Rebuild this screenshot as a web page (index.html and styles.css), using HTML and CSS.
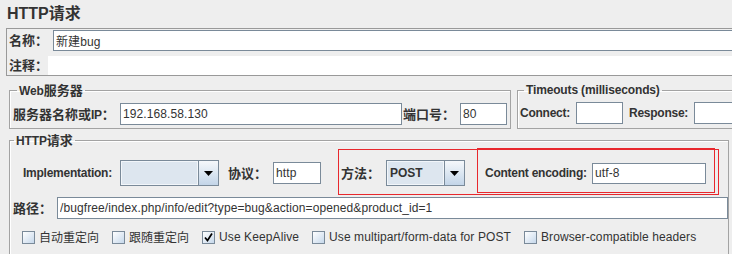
FILE: index.html
```html
<!DOCTYPE html>
<html lang="zh-CN">
<head>
  <meta charset="UTF-8" />
  <title>HTTP请求</title>
  <link rel="stylesheet" href="styles.css">
</head>
<body>
  <h1 class="title">HTTP<span class="zh">请求</span></h1>

  <div class="name-panel">
    <div class="row name-row">
      <label class="lbl w-name"><span class="zh">名称：</span></label>
      <input class="txt grow" type="text" value="新建bug" />
    </div>
    <div class="row comment-row">
      <label class="lbl w-comment"><span class="zh">注释：</span></label>
      <div class="comment"></div>
    </div>
  </div>

  <div class="servers">
    <fieldset class="web">
      <legend>Web<span class="zh">服务器</span></legend>
      <div class="row">
        <label class="lbl w-server"><span class="zh">服务器名称或</span>IP<span class="zh">：</span></label>
        <input class="txt grow" type="text" value="192.168.58.130" />
        <label class="lbl w-port"><span class="zh">端口号：</span></label>
        <input class="txt port" type="text" value="80" />
      </div>
    </fieldset>
    <fieldset class="timeouts">
      <legend>Timeouts (milliseconds)</legend>
      <div class="row">
        <label class="lbl w-connect">Connect:</label>
        <input class="txt port" type="text" value="" />
        <label class="lbl w-response">Response:</label>
        <input class="txt grow" type="text" value="" />
      </div>
    </fieldset>
  </div>

  <fieldset class="http">
    <legend>HTTP<span class="zh">请求</span></legend>

    <div class="row req-row">
      <label class="lbl w-impl">Implementation:</label>
      <div class="combo impl">
        <div class="combo-val"></div>
        <div class="combo-btn"><svg width="9" height="5" viewBox="0 0 9 5"><polygon points="0,0 9,0 4.5,5" fill="#000"/></svg></div>
      </div>
      <label class="lbl w-proto"><span class="zh">协议：</span></label>
      <input class="txt proto" type="text" value="http" />
      <label class="lbl w-method"><span class="zh">方法：</span></label>
      <div class="combo method">
        <div class="combo-val">POST</div>
        <div class="combo-btn"><svg width="9" height="5" viewBox="0 0 9 5"><polygon points="0,0 9,0 4.5,5" fill="#000"/></svg></div>
      </div>
      <label class="lbl w-enc">Content encoding:</label>
      <input class="txt enc" type="text" value="utf-8" />
    </div>

    <div class="row path-row">
      <label class="lbl w-path"><span class="zh">路径：</span></label>
      <input class="txt grow" type="text" value="/bugfree/index.php/info/edit?type=bug&amp;action=opened&amp;product_id=1" />
    </div>

    <div class="row checks">
      <span class="check"><span class="cb"></span><span class="zh-r">自动重定向</span></span>
      <span class="check"><span class="cb"></span><span class="zh-r">跟随重定向</span></span>
      <span class="check"><span class="cb"><svg width="11" height="11" viewBox="0 0 11 11"><polyline points="2,5.5 4.5,8.5 9,1.5" fill="none" stroke="#000" stroke-width="1.7"/></svg></span>Use KeepAlive</span>
      <span class="check"><span class="cb"></span>Use multipart/form-data for POST</span>
      <span class="check"><span class="cb"></span>Browser-compatible headers</span>
    </div>
  </fieldset>

  <!-- red annotation boxes -->
  <div class="mark mark-a"></div>
  <div class="mark mark-b"></div>
</body>
</html>
```

FILE: styles.css
```css
* {
  box-sizing: border-box;
  margin: 0;
  padding: 0;
}

body {
  width: 732px;
  height: 254px;
  overflow: hidden;
  position: relative;
  background-color: #eeeeee;
  color: #333;
  font-family: "Liberation Sans", "Noto Sans CJK SC", sans-serif;
  font-size: 12px;
  line-height: 14px;
}

.zh {
  font-family: "Noto Sans CJK SC", sans-serif;
  font-size: 13px;
  letter-spacing: 0;
}

.zh-r {
  font-family: "Noto Sans CJK SC", sans-serif;
  font-size: 12px;
  letter-spacing: 0;
}

.title {
  height: 28px;
  padding: 2px 0 0 7px;
  font-size: 16px;
  line-height: 20px;
  font-weight: bold;
}

.title .zh {
  font-size: 16px;
}

.row {
  display: flex;
  align-items: center;
}

.lbl {
  flex: none;
  font-weight: bold;
  white-space: nowrap;
  letter-spacing: -0.25px;
}

.grow {
  flex: 1;
  min-width: 0;
}

.txt {
  height: 22px;
  border: 1px solid #7a8a99;
  background: #fff;
  color: #333;
  font: 12px "Liberation Sans", "Noto Sans CJK SC", sans-serif;
  letter-spacing: 0.1px;
  padding: 0 2px;
  outline: none;
}

/* name / comment */
.name-panel {
  height: 48px;
  margin: 0 -10px 0 6px;
  padding: 1px 0 0 2px;
  border: 1px solid #999;
  border-right: none;
}

.name-row .txt { height: 21px; }
.w-name { width: 44px; }
.w-comment { width: 39px; }

.comment-row {
  margin-top: 5px;
}

.comment {
  flex: 1;
  height: 19px;
  background: #fff;
}

/* fieldsets */
fieldset {
  border: 1px solid #a3a3a3;
  box-shadow: inset 1px 1px 0 #fff;
  min-width: 0;
}

legend {
  margin-left: 4px;
  padding: 0 2px;
  font-weight: bold;
  line-height: 14px;
  letter-spacing: -0.15px;
}

.servers {
  display: flex;
  gap: 6px;
  margin: 7px -10px 0 9px;
}

.web {
  width: 502px;
  flex: none;
  padding: 5px 3px 3px 3px;
}

.timeouts {
  flex: 1;
  padding: 5px 0 3px 2px;
  border-right: none;
}

.w-server { width: 107px; }
.w-port { width: 57px; margin-left: 1px; }
.port { width: 47px; flex: none; }
.w-connect { width: 56px; }
.w-response { width: 65px; margin-left: 6px; }

.http {
  height: 122px;
  margin: 4px 3px 0 9px;
  padding: 12px 0 0 0;
  border-bottom: none;
}

.req-row {
  height: 26px;
}

.w-impl { width: 97px; margin-left: 13px; }
.w-proto { width: 45px; margin-left: 9px; }
.w-method { width: 45px; margin-left: 20px; }
.w-enc { width: 107px; margin-left: 20px; }
.proto { width: 48px; flex: none; }
.enc { width: 114px; height: 21px; flex: none; }

.combo {
  display: flex;
  flex: none;
  height: 26px;
  border: 1px solid #7a8a99;
  background: #dde6ef;
}

.combo.impl { width: 99px; }
.combo.method { width: 79px; }

.combo-val {
  flex: 1;
  border: 1px solid #f2f6fa;
  padding-left: 2px;
  font-weight: bold;
  line-height: 22px;
}

.combo-btn {
  width: 20px;
  border-left: 1px solid #7a8a99;
  background: linear-gradient(#f5f8fb, #c3d5e8);
  display: flex;
  align-items: center;
  justify-content: center;
}

.path-row {
  margin-top: 11px;
  padding-left: 3px;
}

.w-path { width: 44px; }

.checks {
  margin-top: 10px;
  height: 16px;
  padding-left: 12px;
  gap: 13px;
}

.check {
  display: flex;
  align-items: center;
  gap: 4px;
  white-space: nowrap;
  letter-spacing: 0.1px;
}

.cb {
  width: 13px;
  height: 13px;
  border: 1px solid #7a8a99;
  background: linear-gradient(135deg, #ffffff, #c6d8eb);
  display: flex;
  align-items: center;
  justify-content: center;
}

/* annotation */
.mark {
  position: absolute;
  border: 1px solid #e8282d;
}

.mark-a {
  left: 338px;
  top: 149px;
  width: 381px;
  height: 46px;
}

.mark-b {
  left: 477px;
  top: 148px;
  width: 238px;
  height: 45px;
}
```
